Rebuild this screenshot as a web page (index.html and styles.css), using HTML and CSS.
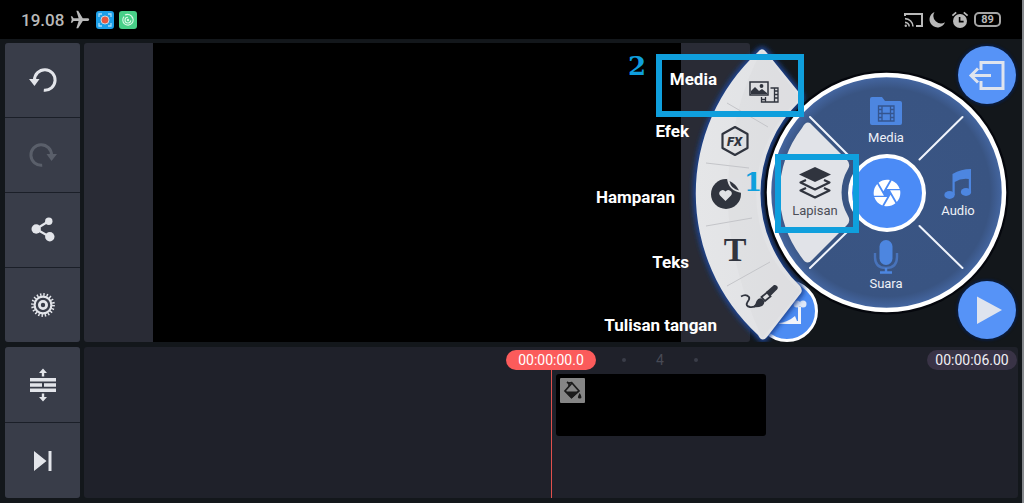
FILE: index.html
```html
<!DOCTYPE html>
<html lang="id">
<head>
<meta charset="UTF-8" />
<meta name="viewport" content="width=device-width, initial-scale=1" />
<title>Editor Video</title>
<link rel="stylesheet" href="styles.css">
</head>
<body>
<header class="status-bar">
  <div class="status-group">
    <span class="clock">19.08</span>
    <svg width="22" height="22" viewBox="0 0 24 24"><path transform="rotate(90 12 12)" fill="#b9b9b9" d="M21 16v-2l-8-5V3.5c0-.83-.67-1.5-1.5-1.5S10 2.67 10 3.5V9l-8 5v2l8-2.5V19l-2 1.5V22l3.5-1 3.5 1v-1.5L13 19v-5.5l8 2.5z"/></svg>
    <svg width="18" height="18" viewBox="0 0 18 18">
      <rect width="18" height="18" rx="3" fill="#1c9fe8"/>
      <path d="M3 6V3h3M12 3h3v3M15 12v3h-3M6 15H3v-3" fill="none" stroke="#a9defa" stroke-width="1.3"/>
      <circle cx="9" cy="9" r="4" fill="#e8573f" stroke="#c8d8e0" stroke-width="1"/>
    </svg>
    <svg width="18" height="18" viewBox="0 0 18 18">
      <rect width="18" height="18" rx="3" fill="#48cf88"/>
      <path d="M5 5.6A5.2 5.2 0 1 0 12.6 5.2M6 3.9A5.4 5.4 0 0 1 13.6 7.4M9 6.2A2.9 2.9 0 1 0 11.8 9.4" fill="none" stroke="#d9f7e6" stroke-width="1.1"/>
      <circle cx="9" cy="9" r="1.2" fill="#d9f7e6"/>
    </svg>
  </div>
  <div class="status-group">
    <svg width="20" height="16" viewBox="0 0 20 16" fill="none" stroke="#b9b9b9" stroke-width="2">
      <path d="M1 4V2h17v12h-6"/>
      <path d="M1 6.6A8 8 0 0 1 9 14.6M1 10.4A4.3 4.3 0 0 1 5.2 14.6" stroke-width="1.6"/>
      <circle cx="1.8" cy="13.8" r="1.2" fill="#b9b9b9" stroke="none"/>
    </svg>
    <svg width="17" height="17" viewBox="0 0 17 17"><path d="M5.5 1A8 8 0 1 0 16 11.3A7.6 7.6 0 0 1 5.5 1z" fill="#b9b9b9"/></svg>
    <svg width="18" height="18" viewBox="0 0 18 18">
      <circle cx="9" cy="10" r="7" fill="#b9b9b9"/>
      <path d="M1.4 4.6L5.2 1.4M16.6 4.6L12.8 1.4" stroke="#b9b9b9" stroke-width="1.8"/>
      <path d="M8.6 6v4.6h4" fill="none" stroke="#000" stroke-width="1.6"/>
    </svg>
    <span class="battery">89</span>
  </div>
</header>

<main class="editor">
  <nav class="toolbar">
    <button class="tool" aria-label="Urungkan">
      <svg width="30" height="30" viewBox="0 0 30 30"><path d="M6.5 15A10.3 10.3 0 1 1 15.8 25.2" fill="none" stroke="#e3e5ea" stroke-width="3"/><path d="M1 14h10.5l-5 7z" fill="#e3e5ea"/></svg>
    </button>
    <button class="tool" aria-label="Ulangi" disabled>
      <svg width="30" height="30" viewBox="0 0 30 30"><path d="M23.5 15A10.3 10.3 0 1 0 14.2 25.2" fill="none" stroke="#5a5f6a" stroke-width="3"/><path d="M29 14H18.5l5 7z" fill="#5a5f6a"/></svg>
    </button>
    <button class="tool" aria-label="Bagikan">
      <svg width="30" height="30" viewBox="0 0 30 30" fill="#e3e5ea"><path d="M21 6L8 14l14 8" fill="none" stroke="#e3e5ea" stroke-width="2.2"/><circle cx="8.2" cy="14" r="4.7"/><circle cx="20.8" cy="6.3" r="3.7"/><circle cx="21.8" cy="21.7" r="4.7"/></svg>
    </button>
    <button class="tool" aria-label="Pengaturan">
      <svg width="30" height="30" viewBox="0 0 30 30" fill="none" stroke="#e3e5ea"><circle cx="15" cy="15" r="8.4" stroke-width="2.2"/><circle cx="15" cy="15" r="10.4" stroke-width="3" stroke-dasharray="1.4 1.867"/><circle cx="15" cy="15" r="3.6" stroke-width="2.8"/></svg>
    </button>
  </nav>

  <section class="stage">
    <div class="preview"><div class="screen"></div></div>

    <div class="radial">
      <!-- Wheel, fan and their outlines -->
      <svg class="radial-art" viewBox="590 43 428 299" aria-hidden="true">
        <defs>
          <radialGradient id="wheelFill" gradientUnits="userSpaceOnUse" cx="886.5" cy="192.5" r="118">
            <stop offset="0" stop-color="#3a5584"/>
            <stop offset=".88" stop-color="#395482"/>
            <stop offset="1" stop-color="#4669a6"/>
          </radialGradient>
          <linearGradient id="fanFill" x1="0" x2="1" y1="0" y2="0">
            <stop offset="0" stop-color="#e5e6e8"/>
            <stop offset="1" stop-color="#e0e1e4"/>
          </linearGradient>
          <filter id="glow" x="-20%" y="-20%" width="140%" height="140%"><feGaussianBlur stdDeviation="2.5"/></filter>
        </defs>
        <circle cx="787" cy="311" r="29.5" fill="#4c8cf3" stroke="#fff" stroke-width="3"/>
        <path d="M779 323q9-1 16-7l2 5h1v-14h3v17h-22z" fill="#f1f4fa"/>
        <circle cx="797" cy="304" r="3.5" fill="#dfe8f8"/><circle cx="803" cy="304" r="3.5" fill="#dfe8f8"/>
        <path d="M758 52A192 192 0 0 0 758 335Q762 343 767 337L801 293Q803 290 800 286A128 128 0 0 1 800 101Q803 98 801 95L767 53Q762 46 758 52z" fill="#24478a" stroke="#1c4596" stroke-width="5" filter="url(#glow)"/>
        <circle cx="886.5" cy="192.5" r="120" fill="none" stroke="#05070d" stroke-width="4"/>
        <path d="M758 52A192 192 0 0 0 758 335Q762 343 767 337L801 293Q803 290 800 286A128 128 0 0 1 800 101Q803 98 801 95L767 53Q762 46 758 52z" fill="url(#fanFill)"/>
        <path d="M762 50Q729 110 728 193Q727 260 762 338L800 291A128 128 0 0 1 800 98z" fill="#d9dadd" opacity=".4"/>
        <path d="M727 103L768 127M706 163L749 168M706 226L752 218M727 286L770 262" stroke="#c4c5c9"/>
        <circle cx="886.5" cy="192.5" r="117.5" fill="url(#wheelFill)" stroke="#fff" stroke-width="4.5"/>
        <path d="M810 117L848 155M962.5 117L919.5 159.5M810 268L848 231M962.5 268L919.5 226" stroke="#f0f4fc" stroke-width="2" stroke-linecap="round"/>
        <path d="M802 128Q807 119 812 125L847 160Q851 164 848 169A46 46 0 0 0 848 216Q851 221 847 225L812 260Q807 266 802 258A106 106 0 0 1 802 128z" fill="#e1e3e8"/>
      </svg>

      <button class="fan-item fan-media">
        <span>Media</span>
        <svg width="30" height="22" viewBox="0 0 30 22">
          <path d="M1 1h18v13H1z" fill="none" stroke="#30343e" stroke-width="1.5"/>
          <path d="M2 13v-3l4-4 4 4 3-2 5 4v1z" fill="#30343e"/><circle cx="12.5" cy="5" r="1.9" fill="#30343e"/>
          <path d="M21.5 7H29v14H12.5v-5M25.5 7v14M25.5 10H29M25.5 13.5H29M25.5 17H29M16.5 16v5M12.5 18.5h4" fill="none" stroke="#30343e" stroke-width="1.3"/>
        </svg>
      </button>
      <button class="fan-item fan-efek">
        <span>Efek</span>
        <svg width="30" height="32" viewBox="0 0 30 32">
          <path d="M15 2l12.5 7v14L15 30 2.5 23V9z" fill="none" stroke="#30343e" stroke-width="2.2" stroke-linejoin="round"/>
          <text x="14.5" y="20.5" text-anchor="middle" class="fx-text">FX</text>
        </svg>
      </button>
      <button class="fan-item fan-hamparan">
        <span>Hamparan</span>
        <svg width="32" height="32" viewBox="0 0 32 32">
          <circle cx="16" cy="16" r="15" fill="#30343e"/>
          <path d="M17 0Q18 13 32 15V0z" fill="#dfe0e3"/>
          <path d="M19.5 3Q26 6 29 12.5Q21 11 19.5 3z" fill="#30343e"/>
          <path d="M15.5 23l-5.5-5.5a3.3 3.3 0 0 1 5.5-4 3.3 3.3 0 0 1 5.5 4z" fill="#e1e2e5"/>
        </svg>
      </button>
      <button class="fan-item fan-teks">
        <span>Teks</span>
        <svg width="28" height="44" viewBox="0 0 28 44"><text x="14" y="33" text-anchor="middle" class="t-text">T</text></svg>
      </button>
      <button class="fan-item fan-tulisan">
        <span>Tulisan tangan</span>
        <svg width="38" height="25" viewBox="0 0 38 25">
          <path d="M1 12.5Q6 9.5 9 13Q10 15 7.5 18Q5 22 10 23Q14 23.5 17 21" fill="none" stroke="#30343e" stroke-width="1.8"/>
          <path d="M13 23Q16 20 16.5 17Q19 12.500 23 15.5Q26 19 22 22Q18 24 13 23z" fill="#30343e"/>
          <path d="M21.5 13L27 8.5l3.5 4-5.5 4.5z" fill="none" stroke="#30343e" stroke-width="1.8"/>
          <path d="M26 8L34 1q1.5-.5 3 1t0 3.5L30 12.5z" fill="#30343e"/>
        </svg>
      </button>

      <button class="wheel-item wheel-media">
        <svg width="32" height="28" viewBox="0 0 32 28">
          <path d="M0 2q0-2 2-2h10l3 4h15q2 0 2 2v20q0 2-2 2H2q-2 0-2-2z" fill="#4d86e0"/>
          <path d="M8.5 9H24v15H8.5zM12 9v15M20.5 9v15M12 16.5h8.5M8.5 12.5H12M8.5 16.5H12M8.5 20.5H12M20.5 12.5H24M20.5 16.5H24M20.5 20.5H24" fill="none" stroke="#34558f" stroke-width="1.3"/>
        </svg>
        <span>Media</span>
      </button>
      <button class="wheel-item wheel-lapisan">
        <svg width="34" height="34" viewBox="0 0 34 34">
          <path d="M17 1l16 7.5L17 16 1 8.5z" fill="#30343e"/>
          <path d="M8 14l-5.5 2.5L17 23.5l14.5-7L26 14M8 22l-5.5 2.5L17 31.5l14.5-7L26 22" fill="none" stroke="#30343e" stroke-width="2.2" stroke-linejoin="round"/>
        </svg>
        <span>Lapisan</span>
      </button>
      <button class="wheel-item wheel-audio">
        <svg width="28" height="30" viewBox="0 0 28 30" fill="#4d86e0">
          <path d="M8.5 5Q17 0 27 0v23h-2.2V10Q17 9 10.7 13v13H8.5z"/>
          <ellipse cx="5.5" cy="26" rx="5.2" ry="3.9"/><ellipse cx="22" cy="23" rx="5.2" ry="3.9"/>
        </svg>
        <span>Audio</span>
      </button>
      <button class="wheel-item wheel-suara">
        <svg width="26" height="34" viewBox="0 0 26 34">
          <rect x="6.5" y="0" width="13" height="25" rx="6.5" fill="#4d86e0"/>
          <path d="M2 13v4q0 11 11 11t11-11v-4" fill="none" stroke="#4873bb" stroke-width="2.4"/>
          <path d="M13 28v4M7 32.5h12" stroke="#4d86e0" stroke-width="2.4"/>
        </svg>
        <span>Suara</span>
      </button>

      <button class="round shutter" aria-label="Kamera">
        <svg width="32" height="32" viewBox="0 0 24 24"><path fill="#fff" d="M9.4 10.5l4.77-8.26C13.47 2.09 12.75 2 12 2c-2.4 0-4.6.85-6.32 2.25l3.66 6.35.06-.1zM21.54 9c-.92-2.92-3.15-5.26-6-6.34L11.88 9h9.66zm.26 1h-7.49l.29.5 4.76 8.25C21 16.97 22 14.61 22 12c0-.69-.07-1.35-.2-2zM8.54 12l-3.9-6.75C3.01 7.03 2 9.39 2 12c0 .69.07 1.35.2 2h7.49l-1.15-2zm-6.08 3c.92 2.92 3.15 5.26 6 6.34L12.12 15H2.46zm11.27 0l-3.9 6.76c.7.15 1.42.24 2.17.24 2.4 0 4.6-.85 6.32-2.25l-3.66-6.35-.93 1.6z"/></svg>
      </button>
      <button class="round exit" aria-label="Keluar">
        <svg width="58" height="58" viewBox="0 0 58 58" fill="none" stroke="#dfe4ee" stroke-width="3"><path d="M23 24v-7.5h22v26H23V35M33 29.5H13M20 22.5l-7 7 7 7"/></svg>
      </button>
      <button class="round play" aria-label="Putar">
        <svg width="58" height="58" viewBox="0 0 58 58"><path d="M19 15.5V43l25-14z" fill="#dfe4ee"/></svg>
      </button>

      <!-- Step markers -->
      <div class="mark mark-two"></div>
      <div class="mark mark-one"></div>
      <span class="step step-two">2</span>
      <span class="step step-one">1</span>
    </div>
  </section>

  <nav class="toolbar">
    <button class="tool tool-low" aria-label="Perluas garis waktu">
      <svg width="30" height="36" viewBox="0 0 30 36" fill="#e3e5ea">
        <path d="M2 11h26v3.6H2zM2 16.2h12v3.6H2zM16 16.2h12v3.6H16zM2 21.4h26V25H2z"/>
        <path d="M15 1.5L19 6h-2.8v3.5h-2.4V6H11zM15 34.5l4-4.5h-2.8v-3.5h-2.4V30H11z"/>
      </svg>
    </button>
    <button class="tool tool-low" aria-label="Ke akhir">
      <svg width="30" height="30" viewBox="0 0 30 30" fill="#e3e5ea"><path d="M6 5l12.5 10L6 25zM20.5 5h3v20h-3z"/></svg>
    </button>
  </nav>

  <section class="timeline">
    <div class="ruler">
      <span class="time time-now">00:00:00.0</span>
      <div class="ruler-rest">
        <div class="ticks"><i></i><b>4</b><i></i></div>
        <span class="time time-total">00:00:06.00</span>
      </div>
    </div>
    <div class="track">
      <div class="clip">
        <svg width="25" height="25" viewBox="0 0 25 25">
          <rect width="25" height="25" rx="1" fill="#858585"/>
          <path d="M7 4l2.5 2M12 5L5 13l6.5 6.5L19 13z" fill="none" stroke="#1b1b1b" stroke-width="1.7"/>
          <path d="M5 13.5h14l-7.5 7zM19.7 15q3.6 5.5 0 5.5t0-5.5z" fill="#1b1b1b"/>
          <path d="M9 8V5l3-.5" fill="none" stroke="#1b1b1b" stroke-width="1.5"/>
        </svg>
      </div>
    </div>
  </section>
</main>
</body>
</html>
```
FILE: styles.css
```css
* {
  box-sizing: border-box;
}
body {
  font-family: Roboto, "Liberation Sans", sans-serif;
  background: #13171b;
  margin: 0;
  min-height: 100vh;
  border-right: 2px solid #85888c;
}
button {
  border: 0;
  padding: 0;
  font: inherit;
  background: none;
  cursor: pointer;
}
svg {
  display: block;
}

/* Status bar */
.status-bar {
  display: flex;
  justify-content: space-between;
  align-items: center;
  height: 39px;
  padding: 0 21px;
  background: #000;
  color: #b9b9b9;
}
.status-group {
  display: flex;
  align-items: center;
  gap: 5px;
}
.clock {
  font-size: 17px;
  font-weight: 500;
}
.battery {
  border: 2px solid #a5a5a5;
  border-radius: 5px;
  width: 27px;
  line-height: 11px;
  text-align: center;
  font-size: 11px;
  font-weight: 700;
}

/* Editor */
.editor {
  display: grid;
  grid-template-columns: 75px 1fr;
  gap: 5px 4px;
  padding: 4px 4px 5px 5px;
}
.toolbar {
  display: flex;
  flex-direction: column;
  gap: 1px;
  border-radius: 3px;
  overflow: hidden;
  background: #1b1f28;
}
.tool {
  display: flex;
  justify-content: center;
  align-items: center;
  height: 74px;
  background: #393d49;
}
.tool-low {
  height: 75px;
}
.stage {
  position: relative;
}
.preview {
  display: flex;
  height: 100%;
  margin-right: 268px;
  padding: 0 69px;
  border-radius: 3px;
  background: #292b35;
}
.screen {
  flex: 1;
  background: #000;
}

/* Radial menu, floats over the preview */
.radial {
  position: absolute;
  top: 0;
  right: 0;
  width: 428px;
  height: 299px;
}
.radial-art {
  width: 100%;
  height: 100%;
}
.fan-item {
  position: absolute;
  display: flex;
  align-items: flex-end;
  color: #fff;
  font-size: 17px;
  font-weight: 700;
  line-height: 20px;
  white-space: nowrap;
}
.fan-media {
  top: 26px;
  right: 239px;
  height: 34px;
  gap: 32px;
}
.fan-efek {
  top: 78px;
  right: 268px;
  height: 36px;
  gap: 31px;
}
.fan-media span,
.fan-efek span {
  align-self: flex-start;
}
.fan-hamparan {
  top: 135px;
  right: 276px;
  height: 29px;
  gap: 35px;
}
.fan-teks {
  top: 185px;
  right: 269px;
  height: 44px;
  gap: 32px;
}
.fan-tulisan {
  top: 241px;
  right: 240px;
  height: 51px;
  gap: 23px;
}
.fan-hamparan svg,
.fan-tulisan svg {
  align-self: flex-start;
}
.fx-text {
  font: italic 900 13px Roboto, sans-serif;
  fill: #30343e;
}
.t-text {
  font: bold 34px "Liberation Serif", serif;
  fill: #30343e;
}
.wheel-item {
  position: absolute;
  display: flex;
  flex-direction: column;
  align-items: center;
  gap: 4px;
  width: 60px;
  color: #eef1f7;
  font-size: 13px;
  line-height: 16px;
}
.wheel-media {
  top: 54px;
  left: 266px;
  gap: 5px;
}
.wheel-lapisan {
  top: 123px;
  left: 195px;
  gap: 3px;
  color: #4b4e57;
}
.wheel-audio {
  top: 126px;
  left: 338px;
}
.wheel-suara {
  top: 197px;
  left: 266px;
  gap: 2px;
}
.round {
  position: absolute;
  display: flex;
  justify-content: center;
  align-items: center;
  width: 58px;
  height: 58px;
  border-radius: 50%;
  background: #5693f7;
  box-shadow: 0 0 2px 2px #0b1c3c;
}
.shutter {
  top: 111px;
  left: 258px;
  width: 78px;
  height: 78px;
  border: 4px solid #fff;
  background: #4b8bf6;
  box-shadow: none;
}
.exit {
  top: 3px;
  right: 2px;
}
.play {
  bottom: 3px;
  right: 2px;
}

/* Step markers */
.mark {
  position: absolute;
  border: 6px solid #0f9fdd;
  pointer-events: none;
}
.mark-two {
  top: 11px;
  left: 66px;
  width: 148px;
  height: 63px;
}
.mark-one {
  top: 111px;
  left: 185px;
  width: 84px;
  height: 79px;
}
.step {
  position: absolute;
  color: #0f9fdd;
  font: bold 26px/26px "DejaVu Serif", serif;
}
.step-two {
  top: 10px;
  left: 38px;
}
.step-one {
  top: 126px;
  left: 154px;
}

/* Timeline */
.timeline {
  display: flex;
  flex-direction: column;
  border-radius: 3px;
  background: #1f212a;
}
.ruler {
  display: grid;
  grid-template-columns: 1fr auto 1fr;
  padding-top: 3px;
}
.time {
  width: 90px;
  border-radius: 10px;
  text-align: center;
  font-size: 14px;
  line-height: 20px;
}
.time-now {
  grid-column: 2;
  background: #fb5b5b;
  color: #fff;
}
.time-total {
  background: #393346;
  color: #f0eff4;
}
.ruler-rest {
  display: flex;
  justify-content: space-between;
  padding-right: 1px;
}
.ticks {
  display: flex;
  align-items: center;
  gap: 30px;
  margin-left: 26px;
  color: #474a55;
}
.ticks i {
  width: 4px;
  height: 4px;
  border-radius: 50%;
  background: #3a3d48;
}
.ticks b {
  font-size: 14px;
  font-weight: 400;
}
.track {
  flex: 1;
  margin-left: 50%;
  border-left: 1px solid #e0504c;
  padding: 4px;
}
.clip {
  max-width: 210px;
  height: 62px;
  padding: 4px;
  border-radius: 3px;
  background: #000;
}
```
